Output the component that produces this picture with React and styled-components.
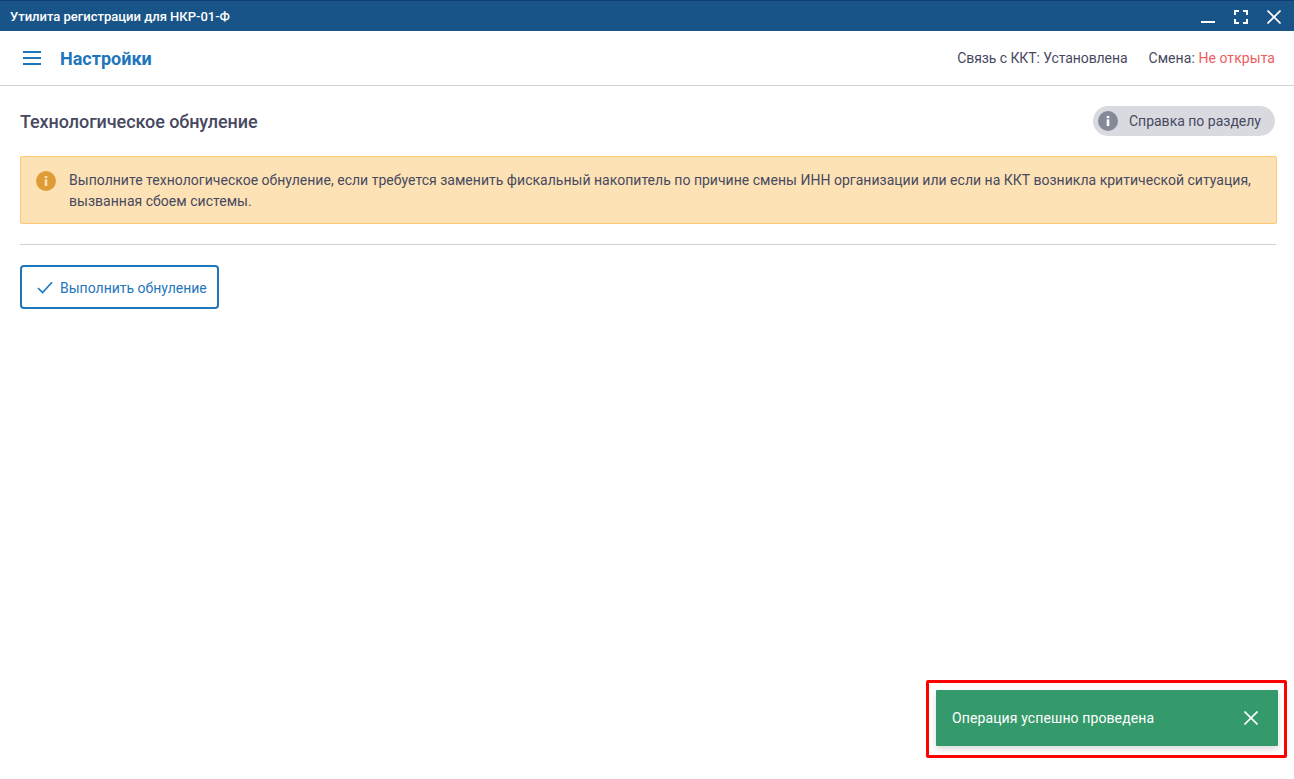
import React from "react";
import styled, { createGlobalStyle } from "styled-components";

const COLORS = {
  titleBar: "#195488",
  titleEdge: "#0f3f6e",
  blue: "#1f76bb",
  text: "#47495f",
  red: "#ee5c5c",
  line: "#d2d2d2",
};

const GlobalStyle = createGlobalStyle`
  html, body {
    margin: 0;
    padding: 0;
    height: 100%;
    background: #fff;
    overflow: hidden;
    font-family: Roboto, "Liberation Sans", sans-serif;
  }
`;

const App = () => {
  return (
    <Wrapper>
      <GlobalStyle />
      <TitleBar>
        <TitleText>Утилита регистрации для НКР-01-Ф</TitleText>
        <WindowButtons>
          <WindowButton aria-label="minimize">
            <svg width="14" height="14" viewBox="0 0 14 14">
              <path d="M0 12h14" stroke="#fff" strokeWidth="2" />
            </svg>
          </WindowButton>
          <WindowButton aria-label="maximize">
            <svg width="14" height="14" viewBox="0 0 14 14" fill="none">
              <path
                d="M1 5V1h4M9 1h4v4M13 9v4H9M5 13H1V9"
                stroke="#fff"
                strokeWidth="2"
              />
            </svg>
          </WindowButton>
          <WindowButton aria-label="close">
            <svg width="14" height="14" viewBox="0 0 14 14" fill="none">
              <path d="M0.5 0.5l13 13M13.5 0.5l-13 13" stroke="#fff" strokeWidth="1.6" />
            </svg>
          </WindowButton>
        </WindowButtons>
      </TitleBar>

      <Header>
        <HeaderLeft>
          <Burger>
            <span />
            <span />
            <span />
          </Burger>
          <PageTitle>Настройки</PageTitle>
        </HeaderLeft>
        <Status>
          <LinkStatus>Связь с ККТ: Установлена</LinkStatus>
          <ShiftStatus>
            Смена: <Danger>Не открыта</Danger>
          </ShiftStatus>
        </Status>
      </Header>

      <Content>
        <SectionHead>
          <SectionTitle>Технологическое обнуление</SectionTitle>
          <HelpButton>
            <HelpIcon>
              <InfoGlyph fill="#fff" />
            </HelpIcon>
            Справка по разделу
          </HelpButton>
        </SectionHead>

        <Notice>
          <NoticeIcon>
            <InfoGlyph fill="#fde2b6" />
          </NoticeIcon>
          <NoticeText>
            Выполните технологическое обнуление, если требуется заменить
            фискальный накопитель по причине смены ИНН организации или если на
            ККТ возникла критической ситуация, вызванная сбоем системы.
          </NoticeText>
        </Notice>

        <Divider />

        <ActionButton>
          <svg width="16" height="13" viewBox="0 0 16 13" fill="none">
            <path d="M1 7l4.6 4.6L15 1.2" stroke={COLORS.blue} strokeWidth="1.6" />
          </svg>
          Выполнить обнуление
        </ActionButton>
      </Content>

      <ToastFrame>
        <Toast>
          <ToastText>Операция успешно проведена</ToastText>
          <ToastClose aria-label="close">
            <svg width="14" height="14" viewBox="0 0 14 14" fill="none">
              <path d="M0.5 0.5l13 13M13.5 0.5l-13 13" stroke="#fff" strokeWidth="1.6" />
            </svg>
          </ToastClose>
        </Toast>
      </ToastFrame>
    </Wrapper>
  );
};

const InfoGlyph = ({ fill }) => (
  <svg width="4" height="10" viewBox="0 0 4 10">
    <rect x="0.7" y="0" width="2.6" height="2.2" fill={fill} />
    <rect x="0.7" y="3.4" width="2.6" height="6.6" fill={fill} />
  </svg>
);

export default App;

const Wrapper = styled.div`
  position: relative;
  display: flex;
  flex-direction: column;
  height: 779px;
  color: ${COLORS.text};
`;

const TitleBar = styled.div`
  display: flex;
  align-items: center;
  justify-content: space-between;
  box-sizing: border-box;
  height: 31px;
  padding: 0 13px 0 10px;
  background: ${COLORS.titleBar};
  border-top: 1px solid ${COLORS.titleEdge};
`;

const TitleText = styled.div`
  color: #fff;
  font-size: 13px;
  font-weight: 500;
`;

const WindowButtons = styled.div`
  display: flex;
  gap: 19px;
  padding-top: 2px;
`;

const WindowButton = styled.button`
  display: flex;
  width: 14px;
  height: 14px;
  padding: 0;
  border: 0;
  background: none;
`;

const Header = styled.div`
  display: flex;
  align-items: center;
  justify-content: space-between;
  height: 54px;
  padding: 0 19px 0 23px;
  border-bottom: 1px solid ${COLORS.line};
`;

const HeaderLeft = styled.div`
  display: flex;
  align-items: center;
  gap: 19px;
`;

const Burger = styled.div`
  display: flex;
  flex-direction: column;
  gap: 4px;
  width: 18px;

  span {
    height: 2px;
    background: ${COLORS.blue};
  }
`;

const PageTitle = styled.div`
  color: ${COLORS.blue};
  font-size: 18px;
  font-weight: 700;
`;

const Status = styled.div`
  display: flex;
  gap: 20px;
  font-size: 14px;
`;

const LinkStatus = styled.span`
  letter-spacing: -0.08px;
  margin-right: 1px;
`;

const ShiftStatus = styled.span`
  letter-spacing: 0.06px;
`;

const Danger = styled.span`
  color: ${COLORS.red};
`;

const Content = styled.div`
  display: flex;
  flex-direction: column;
  align-items: flex-start;
  padding: 20px 17px 0 20px;
`;

const SectionHead = styled.div`
  display: flex;
  align-items: center;
  justify-content: space-between;
  align-self: stretch;
  padding-right: 2px;
  height: 30px;
`;

const SectionTitle = styled.div`
  font-size: 18px;
  font-weight: 500;
  letter-spacing: -0.08px;
`;

const HelpButton = styled.div`
  display: flex;
  align-items: center;
  gap: 11px;
  height: 30px;
  padding: 0 14px 0 5px;
  border-radius: 15px;
  background: #d9dae0;
  font-size: 14px;
`;

const HelpIcon = styled.div`
  display: flex;
  align-items: center;
  justify-content: center;
  width: 20px;
  height: 20px;
  border-radius: 50%;
  background: #868a98;
`;

const Notice = styled.div`
  display: flex;
  align-self: stretch;
  gap: 13px;
  box-sizing: border-box;
  height: 68px;
  margin-top: 20px;
  padding: 14px 15px 0 15px;
  background: #fde2b6;
  border: 1px solid #fbc875;
  border-radius: 2px;
`;

const NoticeIcon = styled.div`
  display: flex;
  flex-shrink: 0;
  align-items: center;
  justify-content: center;
  width: 20px;
  height: 20px;
  border-radius: 50%;
  background: #de9c37;
`;

const NoticeText = styled.div`
  margin-top: -1px;
  font-size: 14px;
  line-height: 21px;
  letter-spacing: 0.02px;
`;

const Divider = styled.div`
  align-self: stretch;
  height: 1px;
  margin: 20px 1px 0 0;
  background: ${COLORS.line};
`;

const ActionButton = styled.button`
  display: flex;
  align-items: center;
  gap: 7px;
  box-sizing: border-box;
  width: 199px;
  height: 44px;
  margin-top: 20px;
  padding: 1px 0 0 15px;
  background: #fff;
  border: 2px solid ${COLORS.blue};
  border-radius: 4px;
  color: ${COLORS.blue};
  font-family: inherit;
  font-size: 14px;
  font-weight: 400;
`;

const ToastFrame = styled.div`
  position: absolute;
  left: 926px;
  top: 680px;
  box-sizing: border-box;
  width: 361px;
  height: 78px;
  padding: 7px 6px 7px 7px;
  border: 3px solid #ff0000;
  border-radius: 2px;
`;

const Toast = styled.div`
  display: flex;
  align-items: center;
  justify-content: space-between;
  height: 56px;
  padding: 0 20px 0 16px;
  background: #359a6b;
  border-radius: 1px;
  box-shadow: 0 3px 6px rgba(0, 0, 0, 0.15);
  color: #fff;
  font-size: 14px;
`;

const ToastText = styled.span`
  letter-spacing: 0.11px;
`;

const ToastClose = styled.button`
  display: flex;
  width: 14px;
  height: 14px;
  padding: 0;
  border: 0;
  background: none;
`;
